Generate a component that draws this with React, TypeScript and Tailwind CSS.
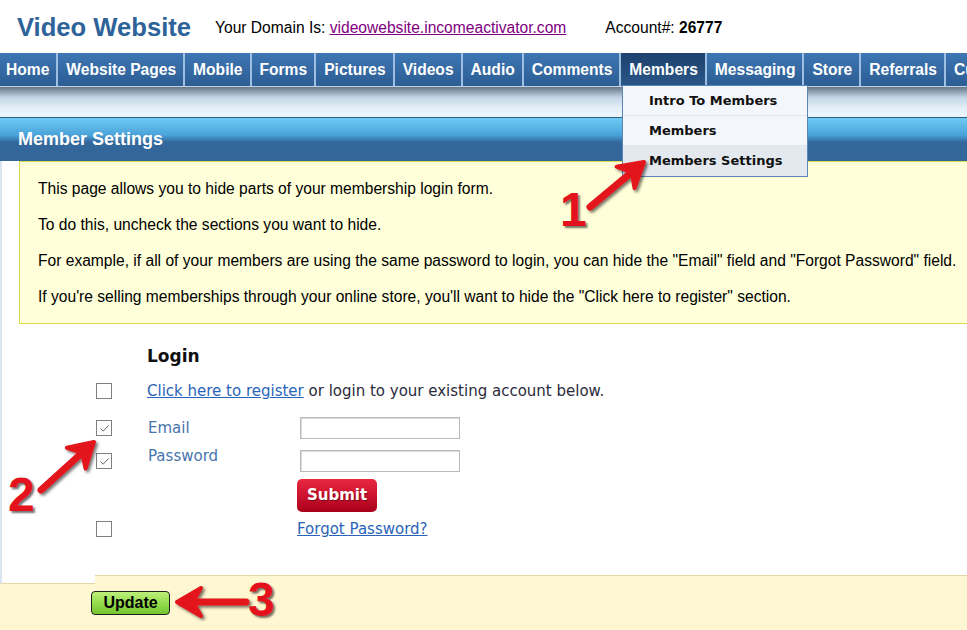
import React from "react";

const navItems = [
  "Home",
  "Website Pages",
  "Mobile",
  "Forms",
  "Pictures",
  "Videos",
  "Audio",
  "Comments",
  "Members",
  "Messaging",
  "Store",
  "Referrals",
  "Customers",
];

const Box = ({ checked }: { checked?: boolean }) => (
  <span className="flex h-[16px] w-[16px] items-center justify-center border border-[#7f7f7f] bg-white">
    {checked && (
      <svg width="11" height="9" viewBox="0 0 11 9">
        <path d="M1.5 4.5 L4.2 7.2 L9.5 1.5" fill="none" stroke="#666" strokeWidth="1" />
      </svg>
    )}
  </span>
);

type ArrowProps = { x1: number; y1: number; x2: number; y2: number };

// red annotation arrow, tail (x1,y1) -> tip (x2,y2)
const Arrow = ({ x1, y1, x2, y2 }: ArrowProps) => {
  const dx = x2 - x1;
  const dy = y2 - y1;
  const len = Math.hypot(dx, dy);
  const ux = dx / len;
  const uy = dy / len;
  const px = -uy;
  const py = ux;
  const hl = 24;
  const hw = 14;
  const bx = x2 - ux * hl;
  const by = y2 - uy * hl;
  const nx = x2 - ux * 16;
  const ny = y2 - uy * 16;
  const pts = [
    [x2, y2],
    [bx + px * hw, by + py * hw],
    [nx, ny],
    [bx - px * hw, by - py * hw],
  ]
    .map((p) => p.join(","))
    .join(" ");
  return (
    <g filter="url(#shadow)">
      <line x1={x1} y1={y1} x2={nx} y2={ny} stroke="#e3121c" strokeWidth="7" strokeLinecap="round" />
      <polygon points={pts} fill="#e3121c" stroke="#e3121c" strokeWidth="4" strokeLinejoin="round" />
    </g>
  );
};

const numCls =
  "absolute text-[48px] leading-none font-bold text-[#e3121c] [text-shadow:2px_2px_2px_rgba(0,0,0,0.55)]";

export default function App() {
  return (
    <div className="relative h-[630px] w-full overflow-hidden bg-white font-['Liberation_Sans',Arial,sans-serif]">
      {/* top header */}
      <div className="flex h-[53px] items-center whitespace-nowrap pl-[17px] pt-[2px]">
        <span className="text-[25.6px] font-bold text-[#2e6399]">Video Website</span>
        <span className="ml-[24px] text-[15.6px] text-black">
          Your Domain Is: <a className="text-[#800080] underline">videowebsite.incomeactivator.com</a>
        </span>
        <span className="ml-[39px] text-[15.6px] text-black">
          Account#: <b>26777</b>
        </span>
      </div>

      {/* nav bar */}
      <div className="flex h-[34px] overflow-hidden whitespace-nowrap border-b border-[#c3d3e3] bg-gradient-to-b from-[#3e77b4] to-[#2c5d93]">
        {navItems.map((item, i) => (
          <div
            key={item}
            className={
              "flex shrink-0 items-center border-r-2 border-[#9ebfe2] pr-[7px] text-[15.6px] font-bold text-white " +
              (i === 0 ? "pl-[6px] " : "pl-[8px] ") +
              (item === "Members" ? "bg-gradient-to-b from-[#1d426e] to-[#2a5688]" : "")
            }
          >
            {item}
          </div>
        ))}
      </div>

      <div className="h-[30px] bg-[linear-gradient(#677687,#c3d5e6_35%,#e4eff9_70%,#eef5fb)]" />

      <div className="flex h-[44px] items-center border-t border-[#2e5a88] bg-[linear-gradient(#6dcbf4,#4aa2d9_40%,#33689c_56%,#336699)] pl-[18px] text-[18px] font-bold text-white">
        Member Settings
      </div>

      <div className="border-l-2 border-[#d9e5f1]">
        <div className="-mr-[4px] ml-[17px] whitespace-nowrap border border-[#dcdc4a] bg-[#ffffd9] pb-[8px] pl-[18px] pt-[9px] text-[15.6px] leading-[36px] text-black">
          <p>This page allows you to hide parts of your membership login form.</p>
          <p>To do this, uncheck the sections you want to hide.</p>
          <p>
            For example, if all of your members are using the same password to login, you can hide the "Email" field
            and "Forgot Password" field.
          </p>
          <p>If you're selling memberships through your online store, you'll want to hide the "Click here to register" section.</p>
        </div>

        {/* login preview */}
        <div className="h-[251px] pl-[94px] pt-[22px] font-['DejaVu_Sans',Verdana,sans-serif] text-[15px]">
          <div className="ml-[51px] h-[20px] text-[17px] font-bold leading-[20px] text-[#111]">Login</div>

          <div className="mt-[14px] grid h-[18px] grid-cols-[51px_1fr] items-center">
            <Box />
            <span className="whitespace-nowrap text-[#2b2b3d]">
              <a className="text-[#2a64b8] underline">Click here to register</a> or login to your existing account below.
            </span>
          </div>

          <div className="mt-[19px] grid h-[22px] grid-cols-[51px_150px_1fr] items-center">
            <Box checked />
            <span className="pl-[1px] text-[#4775ad]">Email</span>
            <span className="ml-[3px] h-[22px] w-[160px] border border-[#b9b9b9] bg-white shadow-[inset_1px_1px_0_#dcdcdc]" />
          </div>

          <div className="mt-[11px] grid h-[22px] grid-cols-[51px_150px_1fr] items-center">
            <Box checked />
            <span className="-translate-y-[5px] pl-[1px] text-[#4775ad]">Password</span>
            <span className="ml-[3px] h-[22px] w-[160px] border border-[#b9b9b9] bg-white shadow-[inset_1px_1px_0_#dcdcdc]" />
          </div>

          <div className="mt-[7px] grid h-[33px] grid-cols-[201px_1fr]">
            <span />
            <button className="h-[33px] w-[80px] rounded-[5px] bg-[linear-gradient(#e8283f,#cc1430_50%,#a8001a)] text-[15px] font-bold text-white [text-shadow:1px_1px_1px_rgba(0,0,0,0.4)]">
              Submit
            </button>
          </div>

          <div className="mt-[6px] grid h-[19px] grid-cols-[201px_1fr] items-center">
            <Box />
            <a className="whitespace-nowrap text-[#2a64b8] underline">Forgot Password?</a>
          </div>
        </div>
      </div>

      {/* footer */}
      <div className="flex h-[9px]">
        <div className="w-[95px] border-b border-l-2 border-b-[#e8d6a6] border-l-[#d9e5f1] bg-white" />
        <div className="flex-1 border-t border-[#e8d6a6] bg-[#fff6d2]" />
      </div>
      <div className="h-[46px] bg-[#fff6d2] pl-[91px] pt-[7px]">
        <button className="h-[24px] w-[79px] rounded-[4px] border border-[#1f1f1f] bg-[linear-gradient(#bdf07a,#96dc4e_50%,#74c42e)] text-[16px] font-bold leading-none text-black">
          Update
        </button>
      </div>

      {/* Members dropdown */}
      <div className="absolute left-[622px] top-[85px] w-[186px] border border-[#5b86b8] font-['DejaVu_Sans',Verdana,sans-serif] text-[13px] font-bold text-[#111]">
        <div className="flex h-[30px] items-center border-b border-[#e2e8ef] bg-[#f3f6fa] pl-[26px]">Intro To Members</div>
        <div className="flex h-[30px] items-center border-b border-[#e2e8ef] bg-[#f3f6fa] pl-[26px]">Members</div>
        <div className="flex h-[30px] items-center bg-[#e4e9ef] pl-[26px]">Members Settings</div>
      </div>

      {/* annotations */}
      <svg className="pointer-events-none absolute left-0 top-0" width="967" height="630">
        <defs>
          <filter id="shadow" x="-20%" y="-20%" width="140%" height="140%">
            <feDropShadow dx="2" dy="2" stdDeviation="1.5" floodColor="#000" floodOpacity="0.55" />
          </filter>
        </defs>
        <Arrow x1={590} y1={207} x2={644} y2={162} />
        <Arrow x1={41} y1={490} x2={94} y2={442} />
        <Arrow x1={246} y1={602} x2={177} y2={602} />
      </svg>
      <span className={numCls + " left-[560px] top-[186px]"}>1</span>
      <span className={numCls + " left-[8px] top-[471px]"}>2</span>
      <span className={numCls + " left-[248px] top-[576px]"}>3</span>
    </div>
  );
}
